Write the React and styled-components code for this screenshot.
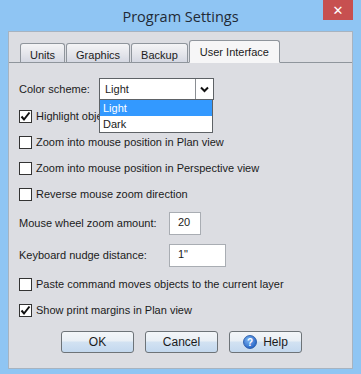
import React, { useState } from "react";
import styled, { createGlobalStyle } from "styled-components";

const GlobalStyle = createGlobalStyle`
  html, body {
    margin: 0;
    padding: 0;
    background: #8fc5f3;
  }
  body {
    font-family: "Liberation Sans", Arial, sans-serif;
  }
`;

const Window = styled.div`
  width: 361px;
  height: 374px;
  background: #8fc5f3;
  display: flex;
  flex-direction: column;
  box-sizing: border-box;
  overflow: hidden;
`;

const TitleBar = styled.div`
  height: 31px;
  position: relative;
  display: flex;
  align-items: center;
  justify-content: center;
`;

const Title = styled.div`
  font-family: "Open Sans", "Liberation Sans", sans-serif;
  font-size: 14.5px;
  color: #1f2a36;
  margin-top: 1px;
`;

const CloseButton = styled.div`
  position: absolute;
  top: 0;
  right: 8px;
  width: 30px;
  height: 20px;
  background: #c75050;
  color: #fff;
  display: flex;
  align-items: center;
  justify-content: center;
  font-size: 13px;
  font-weight: bold;
  font-family: "DejaVu Sans", sans-serif;
`;

const Client = styled.div`
  flex: 1;
  margin: 0 8px 5px 8px;
  background: #dcdde2;
  border: 1px solid #a7b3c0;
  display: flex;
  flex-direction: column;
  box-sizing: border-box;
  color: #1b1b1b;
  font-size: 11px;
`;

const TabStrip = styled.div`
  display: flex;
  align-items: flex-end;
  height: 30px;
  padding-left: 11px;
  border-bottom: 1px solid #8f959c;
`;

const Tab = styled.div`
  height: ${(p) => (p.active ? "23px" : "19px")};
  padding: 0 ${(p) => (p.active ? "10px" : "9px")};
  margin-right: 1px;
  box-sizing: border-box;
  border: 1px solid #8f959c;
  border-bottom: ${(p) => (p.active ? "1px solid #f6f6f7" : "none")};
  margin-bottom: ${(p) => (p.active ? "-1px" : "0")};
  border-radius: 3px 3px 0 0;
  background: ${(p) =>
    p.active
      ? "#f6f6f7"
      : "linear-gradient(#f4f4f6, #e6e7ec 50%, #d5d8e2)"};
  display: flex;
  align-items: center;
  font-size: 11px;
  padding-top: ${(p) => (p.active ? "0" : "3px")};
`;

const Panel = styled.div`
  display: flex;
  flex-direction: column;
  padding: 15px 0 0 10px;
`;

const FieldRow = styled.div`
  display: flex;
  align-items: center;
  height: ${(p) => p.h || 32}px;
`;

const Label = styled.div`
  width: ${(p) => p.w}px;
  white-space: nowrap;
`;

const SelectWrap = styled.div`
  position: relative;
`;

const SelectBox = styled.div`
  width: 115px;
  height: 22px;
  box-sizing: border-box;
  border: 1px solid #5e6266;
  background: #fff;
  display: flex;
  align-items: center;
`;

const SelectValue = styled.div`
  flex: 1;
  padding-left: 5px;
`;

const SelectArrow = styled.div`
  width: 17px;
  height: 100%;
  border-left: 1px solid #8a8e93;
  display: flex;
  align-items: center;
  justify-content: center;
`;

const DropList = styled.div`
  position: absolute;
  top: 22px;
  left: 0;
  width: 114px;
  box-sizing: border-box;
  border: 1px solid #5e6266;
  border-top: none;
  background: #fff;
  z-index: 2;
`;

const DropItem = styled.div`
  height: 16px;
  line-height: 16px;
  padding-left: 3px;
  background: ${(p) => (p.selected ? "#3399ff" : "#fff")};
  color: ${(p) => (p.selected ? "#fff" : "#1b1b1b")};
`;

const CheckRow = styled.label`
  display: flex;
  align-items: center;
  height: 26px;
  gap: 4px;
  white-space: nowrap;
`;

const Box = styled.span`
  width: 13px;
  height: 13px;
  flex-shrink: 0;
  box-sizing: border-box;
  border: 1px solid #333;
  background: #fff;
  display: flex;
  align-items: center;
  justify-content: center;
`;

const TextInput = styled.div`
  width: ${(p) => p.w}px;
  height: 23px;
  box-sizing: border-box;
  border: 1px solid #a9adb3;
  background: #fff;
  padding: 3px 0 0 8px;
`;

const ButtonRow = styled.div`
  display: flex;
  gap: 11px;
  padding-left: 42px;
  margin-top: 8px;
`;

const Button = styled.div`
  width: 73px;
  height: 22px;
  box-sizing: border-box;
  border: 1px solid #6d7378;
  border-radius: 3px;
  background: linear-gradient(#f3f6f9 0%, #e9eff5 45%, #d2e2f2 50%, #c3d8ee 100%);
  display: flex;
  align-items: center;
  justify-content: center;
  gap: 6px;
  font-size: 12px;
`;

const Check = () => (
  <svg width="11" height="11" viewBox="0 0 11 11">
    <path d="M1.5 5.5 L4 8.5 L9.5 1.5" fill="none" stroke="#111" strokeWidth="2" />
  </svg>
);

const Chevron = () => (
  <svg width="9" height="7" viewBox="0 0 9 7">
    <path d="M1 1.5 L4.5 5 L8 1.5" fill="none" stroke="#111" strokeWidth="2" />
  </svg>
);

const HelpIcon = () => (
  <svg width="14" height="14" viewBox="0 0 14 14">
    <defs>
      <radialGradient id="hg" cx="40%" cy="35%" r="70%">
        <stop offset="0%" stopColor="#7fb6f2" />
        <stop offset="100%" stopColor="#1f5fc4" />
      </radialGradient>
    </defs>
    <circle cx="7" cy="7" r="6.5" fill="url(#hg)" stroke="#1d4f9e" strokeWidth="0.8" />
    <text x="7" y="10.5" textAnchor="middle" fontSize="10" fontWeight="bold" fill="#fff" fontFamily="Liberation Sans, sans-serif">?</text>
  </svg>
);

const CheckItem = ({ checked, children }) => (
  <CheckRow>
    <Box>{checked && <Check />}</Box>
    <span>{children}</span>
  </CheckRow>
);

export default function App() {
  const [tabs] = useState(["Units", "Graphics", "Backup", "User Interface"]);
  return (
    <Window>
      <GlobalStyle />
      <TitleBar>
        <Title>Program Settings</Title>
        <CloseButton>✕</CloseButton>
      </TitleBar>
      <Client>
        <TabStrip>
          {tabs.map((t) => (
            <Tab key={t} active={t === "User Interface"}>
              {t}
            </Tab>
          ))}
        </TabStrip>
        <Panel>
          <FieldRow h={22}>
            <Label w={80}>Color scheme:</Label>
            <SelectWrap>
              <SelectBox>
                <SelectValue>Light</SelectValue>
                <SelectArrow>
                  <Chevron />
                </SelectArrow>
              </SelectBox>
              <DropList>
                <DropItem selected>Light</DropItem>
                <DropItem>Dark</DropItem>
              </DropList>
            </SelectWrap>
          </FieldRow>
          <div style={{ height: 3 }} />
          <CheckItem checked>Highlight obje</CheckItem>
          <CheckItem>Zoom into mouse position in Plan view</CheckItem>
          <CheckItem>Zoom into mouse position in Perspective view</CheckItem>
          <CheckItem>Reverse mouse zoom direction</CheckItem>
          <FieldRow>
            <Label w={150}>Mouse wheel zoom amount:</Label>
            <TextInput w={32}>20</TextInput>
          </FieldRow>
          <FieldRow>
            <Label w={150}>Keyboard nudge distance:</Label>
            <TextInput w={57}>1"</TextInput>
          </FieldRow>
          <CheckItem>Paste command moves objects to the current layer</CheckItem>
          <CheckItem checked>Show print margins in Plan view</CheckItem>
          <ButtonRow>
            <Button>OK</Button>
            <Button>Cancel</Button>
            <Button>
              <HelpIcon />
              Help
            </Button>
          </ButtonRow>
        </Panel>
      </Client>
    </Window>
  );
}
